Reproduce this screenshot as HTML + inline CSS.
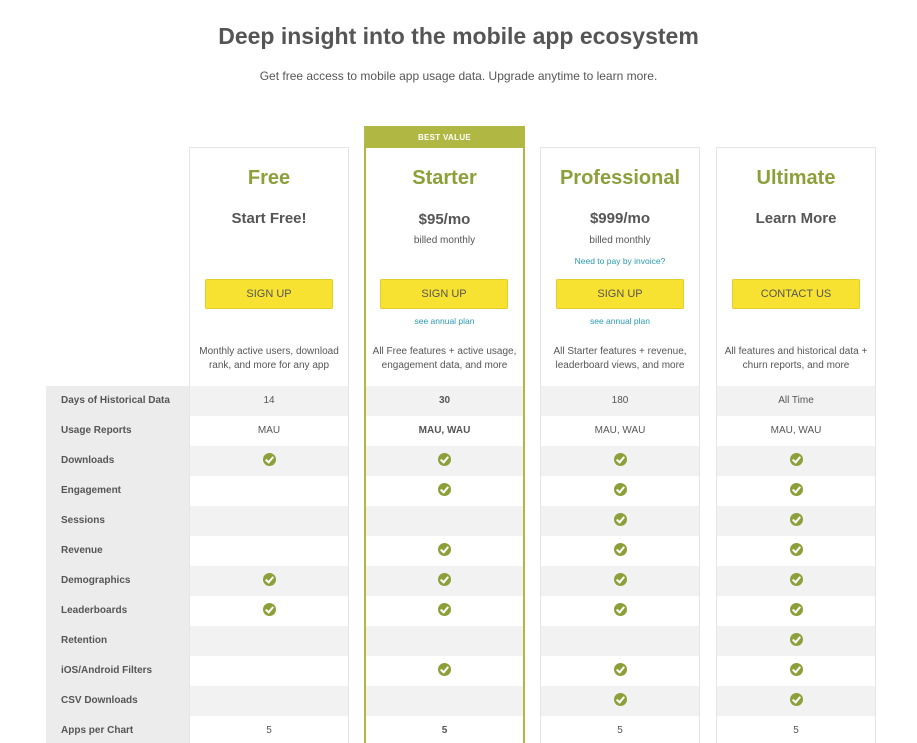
<!DOCTYPE html>
<html style="height:743px;overflow:hidden"><head><style>
*{margin:0;padding:0;box-sizing:border-box}
body{width:917px;height:743px;overflow:hidden;background:#fff;font-family:"Liberation Sans",Arial,sans-serif;color:#555;position:relative}
.a{position:absolute}
h1{position:absolute;top:23px;left:0;width:917px;text-align:center;font-size:23px;font-weight:bold;color:#555}
.sub{top:69px;left:0;width:917px;text-align:center;font-size:12px;color:#555}
.card{position:absolute;top:147px;width:160px;height:600px;border:1px solid #e5e5e5;border-bottom:none}
.card.s{top:126px;border:2px solid #b0b843;border-bottom:none;height:620px}
.bv{position:absolute;top:0;left:0;right:0;height:20px;background:#b0b843;color:#fff;font-size:8px;font-weight:bold;text-align:center;line-height:19px;letter-spacing:.3px}
.t{position:absolute;left:0;width:100%;text-align:center}
.name{top:19px;font-size:20px;font-weight:bold;color:#8ca03a}
.price{top:62px;font-size:15px;font-weight:bold;color:#555}
.bill{top:87px;font-size:10px;color:#555}
.inv{top:108px;font-size:8.5px;color:#2a9ab0}
.btn{position:absolute;top:131px;left:15px;width:128px;height:30px;background:#f8e231;border:1px solid #e4cc2a;border-radius:2px;text-align:center;line-height:28px;font-size:11px;color:#555}
.ann{top:168px;font-size:8.5px;color:#2a9ab0}
.desc{top:197px;font-size:10px;line-height:14px;color:#555;padding:0 6px}
.lab{position:absolute;left:46px;top:386px;width:143px;height:360px;background:#ececec}
.row{position:absolute;height:30px;font-size:10px;line-height:30px}
.lr{left:61px;font-weight:bold;color:#555}
.c{position:absolute;width:158px;height:30px;text-align:center;line-height:30px;font-size:10px;color:#555}
.g{background:#f2f2f2}
.ck{display:inline-block;width:13px;height:13px;border-radius:50%;background:#8ca03a;vertical-align:middle;position:relative;top:-1px}
.ck:after{content:"";position:absolute;left:4px;top:2.5px;width:3px;height:6px;border:solid #fff;border-width:0 2px 2px 0;transform:rotate(40deg)}
</style></head><body>
<h1>Deep insight into the mobile app ecosystem</h1>
<div class="a sub">Get free access to mobile app usage data. Upgrade anytime to learn more.</div>
<div class="lab"></div>
<div class="card" style="left:189px">
<div class="t name">Free</div><div class="t price">Start Free!</div>
<div class="btn">SIGN UP</div>
<div class="t desc">Monthly active users, download rank, and more for any app</div></div>
<div class="card s" style="left:364px;width:161px">
<div class="bv">BEST VALUE</div>
<div class="t name" style="top:39px">Starter</div><div class="t price" style="top:83px">$95/mo</div><div class="t bill" style="top:107px">billed monthly</div>
<div class="btn" style="top:151px;left:14px">SIGN UP</div>
<div class="t ann" style="top:188px">see annual plan</div>
<div class="t desc" style="top:217px">All Free features + active usage, engagement data, and more</div></div>
<div class="card" style="left:540px">
<div class="t name">Professional</div><div class="t price">$999/mo</div><div class="t bill">billed monthly</div><div class="t inv">Need to pay by invoice?</div>
<div class="btn">SIGN UP</div><div class="t ann">see annual plan</div>
<div class="t desc">All Starter features + revenue, leaderboard views, and more</div></div>
<div class="card" style="left:716px">
<div class="t name">Ultimate</div><div class="t price">Learn More</div>
<div class="btn">CONTACT US</div>
<div class="t desc">All features and historical data + churn reports, and more</div></div>
<div id="rows"></div>
<script>
var L=["Days of Historical Data","Usage Reports","Downloads","Engagement","Sessions","Revenue","Demographics","Leaderboards","Retention","iOS/Android Filters","CSV Downloads","Apps per Chart"];
var K="*";
var D=[["14","<b>30</b>","180","All Time"],["MAU","<b>MAU, WAU</b>","MAU, WAU","MAU, WAU"],[K,K,K,K],["",K,K,K],["","",K,K],["",K,K,K],[K,K,K,K],[K,K,K,K],["","","",K],["",K,K,K],["","",K,K],["5","<b>5</b>","5","5"]];
var X=[190,366,541,717],h="";
for(var i=0;i<12;i++){var y=386+i*30;h+='<div class="row lr" style="top:'+y+'px">'+L[i]+'</div>';
for(var j=0;j<4;j++){var v=D[i][j];if(v==K)v='<span class="ck"></span>';h+='<div class="c'+(i%2==0?' g':'')+'" style="left:'+X[j]+'px;top:'+y+'px;'+(j==1?'width:157px':'')+'">'+v+'</div>';}}
document.getElementById("rows").innerHTML=h;
</script>
</body></html>
